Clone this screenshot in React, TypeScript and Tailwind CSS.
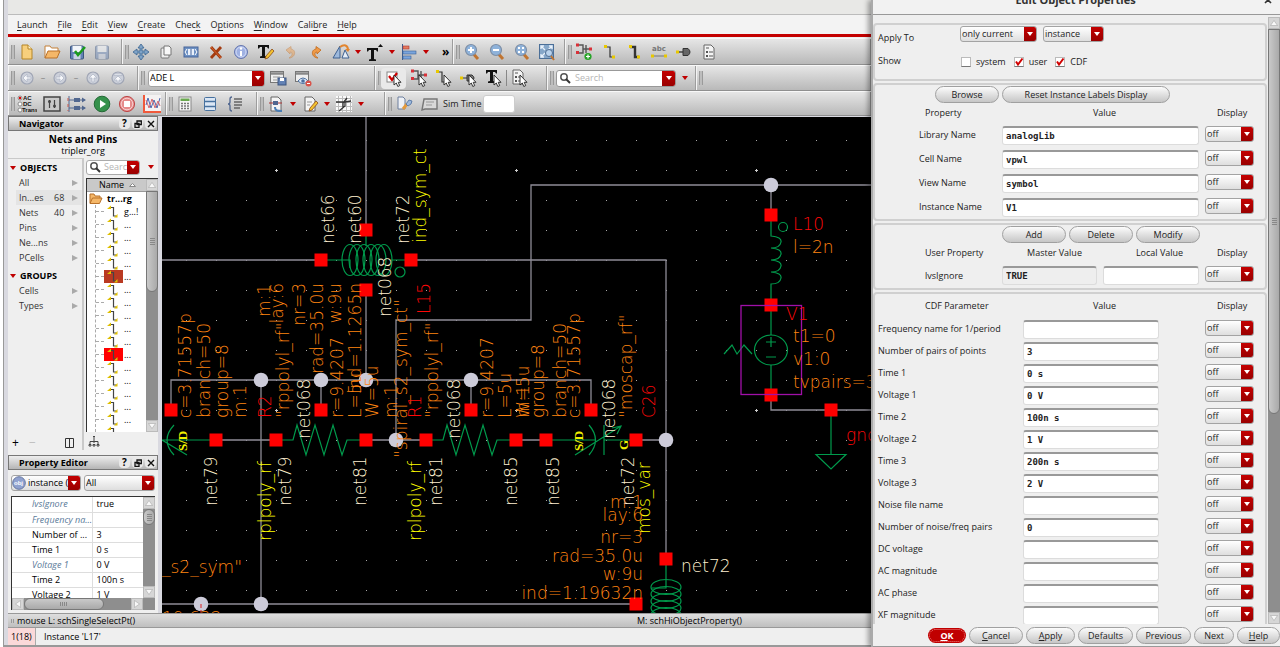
import type { ReactNode } from 'react';
import clsx from 'clsx';

/* ---------- small shared pieces ---------- */

const Svg = ({ children }: { children: ReactNode }) => (
	<svg
		width="18"
		height="18"
		viewBox="0 0 18 18"
		fill="none"
		className="shrink-0"
		aria-hidden="true"
	>
		{children}
	</svg>
);

const Caret = ({ className = 'fill-[#c00000]' }: { className?: string }) => (
	<svg width="6" height="4" viewBox="0 0 6 4" className={className}>
		<path d="M0 0h6L3 4z" />
	</svg>
);

const Tool = ({
	name,
	active,
	children,
}: {
	name: string;
	active?: boolean;
	children: ReactNode;
}) => (
	<button
		aria-label={name}
		className={clsx(
			'flex h-[21px] w-[25px] shrink-0 items-center justify-center rounded',
			active && 'bg-[#e9e9e9]'
		)}
	>
		{children}
	</button>
);

const More = () => (
	<button aria-label="More" className="flex w-[9px] shrink-0 justify-center">
		<Caret />
	</button>
);

const Group = ({
	children,
	className = '',
}: {
	children?: ReactNode;
	className?: string;
}) => (
	<div
		className={clsx(
			'flex shrink-0 items-center border-r border-r-[#9d9d9d] border-l border-l-[#f4f4f4] pl-[2px]',
			className
		)}
	>
		<span className="-mr-px h-[14px] w-1 shrink-0 border-x border-[#9a9a9a] bg-[#bdbdbd]" />
		{children}
	</div>
);

const Toolbar = ({ children, className }: { children: ReactNode; className: string }) => (
	<div
		className={clsx(
			'flex shrink-0 overflow-hidden border-t border-b border-t-[#f8f8f8] border-b-[#8f8f8f] bg-linear-to-b from-[#e6e6e6] to-[#b9b9b9]',
			className
		)}
	>
		{children}
	</div>
);

const Combo = ({
	label,
	value,
	className,
	white,
	icon,
}: {
	label: string;
	value: string;
	className: string;
	white?: boolean;
	icon?: ReactNode;
}) => (
	<div
		className={clsx(
			'flex h-4 shrink-0 items-center overflow-hidden rounded-[3px] border border-[#a3a3a3]',
			white ? 'bg-white' : 'bg-linear-to-b from-white to-[#dedede]',
			className
		)}
	>
		{icon}
		<select
			aria-label={label}
			className="h-full min-w-0 flex-1 appearance-none pl-px leading-[12px] outline-none"
		>
			<option>{value}</option>
		</select>
		<span className="pointer-events-none flex h-full w-3 shrink-0 items-center justify-center bg-linear-to-b from-[#c40000] to-[#990000]">
			<Caret className="fill-white" />
		</span>
	</div>
);

/* ---------- toolbar icons ---------- */

const Page = () => (
	<path d="M4 2h7l3 3v11H4z" fill="#f4f4f4" stroke="#666" />
);

const Pointer = () => (
	<path
		d="M9 6v10l2.300-2 1.500 3.500 1.900-.9-1.500-3.300H16z"
		fill="#fff"
		stroke="#222"
		strokeWidth=".9"
	/>
);

const NewIcon = () => (
	<Svg>
		<path d="M4 2h6l4 4v10H4z" fill="#f7cf7c" stroke="#b58526" />
		<path d="M10 2v4h4" fill="#fff1c9" stroke="#b58526" />
	</Svg>
);
const OpenIcon = () => (
	<Svg>
		<path d="M2 15V3h5l1.500 2H15v3" fill="#fff" stroke="#c48039" />
		<path d="M2 15 5 8h12l-3 7z" fill="#f5b768" stroke="#b97129" />
	</Svg>
);
const SaveIcon = ({ check }: { check?: boolean }) => (
	<Svg>
		<g opacity={check ? 1 : 0.45}>
			<rect x="2.500" y="3" width="13" height="13" rx="1" fill="#6382b5" stroke="#3c557f" />
			<rect x="4.500" y="3" width="9" height="6" fill="#f2f5fa" />
			<rect x="5.500" y="11" width="7" height="5" fill="#c8d2e4" />
		</g>
		{check && <path d="m7 8 3 4 7-8" stroke="#1c9c1c" strokeWidth="2.500" />}
	</Svg>
);
const MoveIcon = () => (
	<Svg>
		<path
			d="M8 5H6l3-4 3 4h-2v3h3V6l4 3-4 3v-2h-3v3h2l-3 4-3-4h2v-3H5v2L1 9l4-3v2h3z"
			fill="#7fa3c7"
			stroke="#3b6490"
			strokeWidth=".8"
		/>
	</Svg>
);
const CopyIcon = () => (
	<Svg>
		<rect x="4" y="5" width="8" height="10" rx="1" fill="#eee" stroke="#777" />
		<path d="M7 3h5l2 2v7H7z" fill="#f8f8f8" stroke="#777" />
	</Svg>
);
const StretchIcon = () => (
	<Svg>
		<rect x="2" y="4" width="14" height="10" fill="#6f92c4" stroke="#47659a" />
		<rect x="6" y="6" width="6" height="6" fill="#e9f0fb" />
		<path d="m5 6-2 3 2 3M13 6l2 3-2 3" stroke="#fff" />
		<path d="M9 6v6" stroke="#47659a" />
	</Svg>
);
const DeleteIcon = () => (
	<Svg>
		<path d="m4 4 10 11M14 4 4 15" stroke="#a33b10" strokeWidth="2.800" />
		<path d="m4 4 10 11" stroke="#d8622a" />
	</Svg>
);
const InfoIcon = () => (
	<Svg>
		<circle cx="9" cy="9" r="6.500" fill="#9fb1e2" stroke="#6576ae" />
		<circle cx="9" cy="9" r="5" stroke="#dfe6fa" strokeWidth=".8" />
		<path d="M9 8v5" stroke="#fff" strokeWidth="2" />
		<circle cx="9" cy="5.500" r="1.200" fill="#fff" />
	</Svg>
);
const LetterT = () => (
	<path d="M2 3h11v3.500h-1L11 5H9v9l2 .5V16H4v-1.500l2-.5V5H4L3 6.500H2z" fill="#111" />
);
const Pencil = () => (
	<path d="m8 16 1-3 6-7 2 2-6 7z" fill="#f2c230" stroke="#8c4a18" strokeWidth=".8" />
);
const TextEditIcon = () => (
	<Svg>
		<g transform="translate(-1 -1)">
			<LetterT />
		</g>
		<Pencil />
	</Svg>
);
const CurlIcon = ({ redo }: { redo?: boolean }) => (
	<Svg>
		<g opacity={redo ? 1 : 0.45} transform={redo ? undefined : 'matrix(-1 0 0 1 18 0)'}>
			<path
				d="M9 3.500 14 7l-4 4V9c-3 0-3 4 1 6C5 15 3 7 9 6z"
				fill="#ef9a48"
				stroke="#c26a1a"
				strokeWidth=".8"
			/>
		</g>
	</Svg>
);
const RotateIcon = () => (
	<Svg>
		<path d="M8 3v12H1z" fill="#9db9dc" stroke="#3e6090" />
		<path d="m10 15 3-8 4 8z" fill="#e5edf7" stroke="#3e6090" />
		<path d="M8 4c4-3 8-2 8 3" stroke="#e3852e" strokeWidth="2" />
		<path d="m13 6 5 0-2 3z" fill="#e3852e" />
	</Svg>
);
const TextUpIcon = () => (
	<Svg>
		<g transform="translate(-1 2)">
			<LetterT />
		</g>
		<path d="m12 4 2.500-3L17 4z" fill="#111" />
	</Svg>
);
const AlignIcon = () => (
	<Svg>
		<path d="M2.500 1v16" stroke="#3a5f93" />
		<rect x="3" y="3" width="6" height="3" fill="#e57b5d" stroke="#a33" strokeWidth=".6" />
		<rect x="3" y="8" width="13" height="3" fill="#7aa5dd" stroke="#3a5f93" strokeWidth=".6" />
		<rect x="3" y="13" width="8" height="3" fill="#7aa5dd" stroke="#3a5f93" strokeWidth=".6" />
	</Svg>
);
const LensIcon = ({ mark }: { mark: string }) => (
	<Svg>
		<path d="m10.500 11 4.500 5" stroke="#c07430" strokeWidth="3" />
		<circle cx="8" cy="7" r="5.500" fill="#8eb2da" stroke="#7d8ea5" strokeWidth="1.200" />
		<path d={mark} stroke="#fff" strokeWidth="2" />
	</Svg>
);
const LensFrameIcon = () => (
	<Svg>
		<rect x="1.500" y="1.500" width="14" height="14" fill="#86a7c9" stroke="#4b6f98" />
		<path d="M6 3H3v3M3 3l4 4M14 6V3h-3m3 0-4 4M3 11v3h3m-3 0 4-4" stroke="#e8f1fb" strokeWidth="1.300" />
		<circle cx="11" cy="10" r="3.500" fill="#b9d2ec" stroke="#4f6d92" />
		<path d="m13 13 3 4" stroke="#c07430" strokeWidth="2" />
	</Svg>
);
const InstGlyph = () => (
	<>
		<path d="M2 4h6v8H3M8 8h6m-3-4v8" stroke="#555" strokeWidth="1.400" />
		<path d="M1 2.500h3v3H1zM1 10h3v3H1zM14 6.500h3v3h-3z" fill="#d83038" />
	</>
);
const InstanceIcon = () => (
	<Svg>
		<g transform="translate(0 -2)">
			<InstGlyph />
		</g>
		<circle cx="13" cy="13.500" r="3.600" fill="#28a428" />
		<path d="M13 11.500v4m-2-2h4" stroke="#fff" strokeWidth="1.200" />
	</Svg>
);
const WireGlyph = ({ wide }: { wide?: boolean }) => (
	<>
		<path d="M5 4h5v10h4" stroke="#333" strokeWidth={wide ? 2.4 : 1.2} />
		<path d="M4 2h3v3H4zM12 12.500h3v3h-3z" fill="#e8c800" />
	</>
);
const WireIcon = ({ wide }: { wide?: boolean }) => (
	<Svg>
		<WireGlyph wide={wide} />
	</Svg>
);
const LabelIcon = () => (
	<svg width="20" height="16" viewBox="0 0 20 16" aria-hidden="true">
		<text x="3" y="7" className="fill-[#777] font-[DejaVu_Sans] text-[7px] font-bold">
			abc
		</text>
		<path d="M3 12h14" stroke="#777" />
		<path d="M2 10.500h3v3H2zM15 10.500h3v3h-3z" fill="#e8c800" />
	</svg>
);
const PinIcon = () => (
	<Svg>
		<path d="M2 9h6" stroke="#444" strokeWidth="1.500" />
		<path d="M8 5.500h5q4 3.500 0 7H8z" fill="#666" stroke="#333" />
		<path d="M1 7.500h3v3H1z" fill="#e8c800" />
	</Svg>
);
const FormGlyph = () => (
	<>
		<Page />
		<path d="M6 8h2v2H6zM6 12h2v2H6z" fill="#555" />
		<path d="M9 9h4M9 13h4M6 5h3" stroke="#555" />
	</>
);
const FormIcon = () => (
	<Svg>
		<FormGlyph />
	</Svg>
);
const NavIcon = ({ d }: { d: string }) => (
	<Svg>
		<circle cx="9" cy="9" r="6" fill="#ccd0da" stroke="#a0a6b5" strokeWidth="1.200" />
		<path d={d} fill="#f6f7fa" stroke="#b3b9c8" strokeWidth=".8" />
	</Svg>
);
const PanelIcon = ({ eye }: { eye?: boolean }) => (
	<Svg>
		<rect x="1.500" y="2.500" width="13" height={eye ? 10 : 11} fill="#eee" stroke="#777" />
		<path d="M2 4.500h12" stroke="#888" strokeWidth="2.500" />
		{eye ? (
			<>
				<path d="M4 12q5-6 10 0-5 5-10 0z" fill="#dbe8f7" stroke="#4c6f9f" />
				<circle cx="9" cy="12" r="1.800" fill="#4c6f9f" />
				<circle cx="14.500" cy="14.500" r="3" fill="#d9534a" />
				<path d="M13 14.500h3" stroke="#fff" />
			</>
		) : (
			<>
				<path d="M4 8h7M4 11h4" stroke="#999" />
				<rect x="9" y="9" width="8" height="7" fill="#6382b5" stroke="#3c557f" />
				<rect x="11" y="9" width="4" height="3" fill="#fff" />
			</>
		)}
	</Svg>
);
const PickIcon = ({ children }: { children: ReactNode }) => (
	<Svg>
		{children}
		<Pointer />
	</Svg>
);
const AcDcIcon = () => (
	<svg width="20" height="20" viewBox="0 0 20 20" aria-hidden="true">
		<g fill="#fff" stroke="#777" strokeWidth=".8">
			<circle cx="3" cy="4" r="2" />
			<circle cx="3" cy="10" r="2" />
			<circle cx="3" cy="16" r="2" />
		</g>
		<circle cx="3" cy="4" r="1.200" fill="#d00" />
		<g className="fill-[#111] font-[Liberation_Sans] text-[6px] font-bold">
			<text x="6" y="6">AC</text>
			<text x="6" y="12">DC</text>
			<text x="5" y="18">Trans</text>
		</g>
	</svg>
);
const SlidersIcon = () => (
	<Svg>
		<rect x="1" y="2" width="16" height="14" fill="#c9c9c9" stroke="#444" strokeWidth="1.500" />
		<path d="M6.500 5v8M11.500 5v8" stroke="#444" strokeWidth="1.200" />
		<circle cx="6.500" cy="6.500" r="1.500" fill="#444" />
		<circle cx="11.500" cy="11" r="1.500" fill="#444" />
	</Svg>
);
const OutputsIcon = () => (
	<svg width="20" height="18" viewBox="0 0 20 18" aria-hidden="true">
		<path d="M2 1v16M2 5h16M2 13h16" stroke="#51678f" fill="none" />
		<path d="M1 3v13" stroke="#cc5a4a" strokeDasharray="3 3" />
		<rect x="7" y="3" width="6" height="4" fill="#51678f" />
		<rect x="7" y="11" width="6" height="4" fill="#51678f" />
		<path d="m15 2.500 4 2.500-4 2.500zM15 10.500l4 2.500-4 2.500z" fill="#51678f" />
	</svg>
);
const PlayIcon = () => (
	<Svg>
		<circle cx="9" cy="9" r="7.800" fill="#35914b" stroke="#236935" />
		<path d="m7 5 6 4-6 4z" fill="#fff" />
	</Svg>
);
const StopIcon = () => (
	<Svg>
		<circle cx="9" cy="9" r="7.600" fill="#e58b8b" stroke="#bd4747" />
		<circle cx="9" cy="9" r="5.800" stroke="#f6cfcf" />
		<rect x="6" y="6" width="6" height="6" fill="#fff" />
	</Svg>
);
const PlotIcon = () => (
	<Svg>
		<rect width="18" height="18" fill="#f4f2f2" />
		<path d="M1 0v17h17" stroke="#f0593b" strokeWidth="2" />
		<path d="m3 10 2-7 3 10 3-8 3 8 3-10" stroke="#4b66b0" />
		<path d="m3 5 3 8 3-9 3 9 3-7 2 5" stroke="#d56a72" />
	</Svg>
);
const CalcIcon = () => (
	<Svg>
		<rect x="3" y="2" width="12" height="14" fill="#f5f5f5" stroke="#888" />
		<rect x="4.500" y="3.500" width="9" height="2.500" fill="#6aa84f" />
		<path d="M5 8.500h8M5 11h8M5 13.500h8" stroke="#777" strokeWidth="1.500" strokeDasharray="2 1" />
	</Svg>
);
const StackIcon = () => (
	<Svg>
		<rect x="3.500" y="2.500" width="11" height="13" rx="1" fill="#dbe7f5" stroke="#47719f" />
		<path d="M4 6.500h10M4 11.500h10" stroke="#47719f" strokeWidth="1.500" />
	</Svg>
);
const BraceIcon = () => (
	<Svg>
		<path d="M6 2Q4 2 4 4v3q0 2-2 2 2 0 2 2v3q0 2 2 2" stroke="#51678f" strokeWidth="1.300" />
		<path d="M8 4h8M8 7h8M8 10h8M8 13h6" stroke="#666" strokeWidth="1.400" />
	</Svg>
);
const SheetIcon = () => (
	<Svg>
		<Page />
		<path d="M2 8h13" stroke="#a33" />
		<rect x="6" y="6" width="5" height="4" fill="#51678f" />
		<path d="M8 12c0 4 3 4 7 4" stroke="#4a7db5" strokeWidth="2" />
	</Svg>
);
const NoteIcon = () => (
	<Svg>
		<Page />
		<path d="M6 7h5M6 10h3" stroke="#999" />
		<Pencil />
	</Svg>
);
const GridIcon = () => (
	<Svg>
		<rect x="1" y="1" width="16" height="16" fill="#fafafa" />
		<path d="M3.500 1v16M7.500 1v16M11.500 1v16M15.500 1v16M1 3.500h16M1 7.500h16M1 11.500h16M1 15.500h16" stroke="#bbb" />
		<path d="M1 7h9v4l-6 5M10 7l6-1M12 3l-4 5v4" stroke="#333" strokeWidth="1.300" />
	</Svg>
);
const WrenchIcon = () => (
	<Svg>
		<path d="M3 2h5l2 2v10H3z" fill="#eef1f6" stroke="#6d7f9d" />
		<path d="m8 14 4-5" stroke="#e49a3c" strokeWidth="3" />
		<path d="m11 9 3-4 3 1-1 3-3 2z" fill="#9db9dc" stroke="#4c6f9f" strokeWidth=".8" />
	</Svg>
);
const NoteBoxIcon = () => (
	<Svg>
		<path d="M4 4h13v10H5l-3 1z" fill="#d9d9d9" stroke="#777" strokeWidth="1.400" />
		<path d="M6 7h8M6 10h6" stroke="#999" />
	</Svg>
);
const FindIcon = () => (
	<svg width="12" height="12" viewBox="0 0 12 12" className="shrink-0" fill="none" aria-hidden="true">
		<circle cx="5" cy="5" r="3.200" stroke="#555" strokeWidth="1.500" />
		<path d="m7 7 4 4" stroke="#333" strokeWidth="2" />
	</svg>
);

/* ---------- menu and toolbars ---------- */

// [before, mnemonic, after]
const menus = [
	['', 'L', 'aunch'],
	['', 'F', 'ile'],
	['', 'E', 'dit'],
	['', 'V', 'iew'],
	['', 'C', 'reate'],
	['Chec', 'k', ''],
	['O', 'p', 'tions'],
	['', 'W', 'indow'],
	['Cali', 'b', 're'],
	['', 'H', 'elp'],
];

const MenuBar = () => (
	<nav className="flex h-[19px] shrink-0 items-center gap-[10px] bg-[#f3f3f3] pt-px pl-[9px] text-[#222]">
		{menus.map(([a, key, b]) => (
			<button key={a + key + b}>
				{a}
				<u className="underline-offset-2">{key}</u>
				{b}
			</button>
		))}
	</nav>
);

const Toolbars = () => (
	<div className="shrink-0 border-t-[3px] border-[#c40000] pt-px">
		<Toolbar className="h-[27px]">
			<Group className="w-[114px]">
				<Tool name="New"><NewIcon /></Tool>
				<Tool name="Open"><OpenIcon /></Tool>
				<Tool name="Check and Save"><SaveIcon check /></Tool>
				<Tool name="Save"><SaveIcon /></Tool>
			</Group>
			<Group className="w-[331px]">
				<Tool name="Move"><MoveIcon /></Tool>
				<Tool name="Copy"><CopyIcon /></Tool>
				<Tool name="Stretch"><StretchIcon /></Tool>
				<Tool name="Delete"><DeleteIcon /></Tool>
				<Tool name="Info"><InfoIcon /></Tool>
				<Tool name="Edit text"><TextEditIcon /></Tool>
				<Tool name="Undo"><CurlIcon /></Tool>
				<Tool name="Redo"><CurlIcon redo /></Tool>
				<Tool name="Rotate"><RotateIcon /></Tool>
				<More />
				<Tool name="Font up"><TextUpIcon /></Tool>
				<More />
				<Tool name="Align"><AlignIcon /></Tool>
				<More />
				<button className="ml-3 text-[12px] leading-none font-bold">»</button>
			</Group>
			<Group className="w-[112px]">
				<Tool name="Zoom in"><LensIcon mark="M8 4v6M5 7h6" /></Tool>
				<Tool name="Zoom out"><LensIcon mark="M5 7h6" /></Tool>
				<Tool name="Zoom fit"><LensIcon mark="M5 5h2M9 5h2M5 9h2M9 9h2" /></Tool>
				<Tool name="Zoom selected"><LensFrameIcon /></Tool>
			</Group>
			<Group className="flex-1">
				<Tool name="Add instance"><InstanceIcon /></Tool>
				<Tool name="Narrow wire"><WireIcon /></Tool>
				<Tool name="Wide wire"><WireIcon wide /></Tool>
				<Tool name="Label"><LabelIcon /></Tool>
				<Tool name="Pin"><PinIcon /></Tool>
				<Tool name="Form"><FormIcon /></Tool>
			</Group>
		</Toolbar>
		<Toolbar className="h-[26px]">
			<Group className="w-[130px] text-[#888]">
				<Tool name="Back"><NavIcon d="m5 9 4-4v3h4v2H9v3z" /></Tool>
				<span className="w-2 text-center">–</span>
				<Tool name="Forward"><NavIcon d="m13 9-4-4v3H5v2h4v3z" /></Tool>
				<span className="w-2 text-center">–</span>
				<Tool name="Up"><NavIcon d="m9 5 4 4h-3v4H8V9H5z" /></Tool>
				<Tool name="Top"><NavIcon d="M5 5h8v1.500H5zM9 7l4 4h-3v2H8v-2H5z" /></Tool>
			</Group>
			<Group className="w-[237px]">
				<Combo label="Workspace" value="ADE L" white className="ml-[4px] h-[17px] w-[117px]" />
				<Tool name="Save workspace"><PanelIcon /></Tool>
				<Tool name="Hide workspace"><PanelIcon eye /></Tool>
			</Group>
			<Group className="w-[172px]">
				<Tool name="Select all" active>
					<PickIcon>
						<rect x="2" y="3" width="10" height="10" fill="#fff" stroke="#888" />
						<path d="m4 7 3 4 5-7" stroke="#d00000" strokeWidth="2.200" />
					</PickIcon>
				</Tool>
				<Tool name="Select instance"><PickIcon><g transform="translate(0 -2)"><InstGlyph /></g></PickIcon></Tool>
				<Tool name="Select wire"><PickIcon><g transform="translate(-3 -1)"><WireGlyph /></g></PickIcon></Tool>
				<Tool name="Select pin">
					<PickIcon>
						<path d="M1 9h6m0-3h5q4 3 0 6H7z" fill="#777" stroke="#333" />
						<path d="M0 7.500h3v3H0z" fill="#e8c800" />
					</PickIcon>
				</Tool>
				<Tool name="Select text"><PickIcon><g transform="translate(-1 -2)"><LetterT /></g></PickIcon></Tool>
				<span className="h-4 w-px bg-[#888]" />
				<Tool name="Select form"><PickIcon><g transform="translate(-2 -1)"><FormGlyph /></g></PickIcon></Tool>
			</Group>
			<Group className="w-[149px]">
				<div className="ml-[3px] flex h-[17px] w-[120px] items-center overflow-hidden rounded-[3px] border border-[#999] bg-white pl-[2px]">
					<FindIcon />
					<input
						aria-label="Search"
						placeholder="Search"
						className="ml-1 w-0 flex-1 outline-none placeholder:text-[#b5b5b5]"
					/>
					<span className="flex h-full w-[13px] items-center justify-center bg-linear-to-b from-[#c40000] to-[#990000]">
						<Caret className="fill-white" />
					</span>
				</div>
				<span className="ml-1"><More /></span>
			</Group>
			<Group className="flex-1" />
		</Toolbar>
		<Toolbar className="h-[25px]">
			<Group className="w-[158px]">
				<Tool name="Choose analyses"><AcDcIcon /></Tool>
				<Tool name="Variables"><SlidersIcon /></Tool>
				<Tool name="Outputs"><OutputsIcon /></Tool>
				<Tool name="Run"><PlayIcon /></Tool>
				<Tool name="Stop"><StopIcon /></Tool>
				<Tool name="Plot"><PlotIcon /></Tool>
			</Group>
			<Group className="w-[91px]">
				<Tool name="Calculator"><CalcIcon /></Tool>
				<Tool name="Results"><StackIcon /></Tool>
				<Tool name="Expressions"><BraceIcon /></Tool>
			</Group>
			<Group className="w-[128px]">
				<Tool name="Sheet"><SheetIcon /></Tool>
				<More />
				<Tool name="Annotate"><NoteIcon /></Tool>
				<More />
				<Tool name="Grid"><GridIcon /></Tool>
				<More />
			</Group>
			<Group className="flex-1">
				<Tool name="Configure"><WrenchIcon /></Tool>
				<Tool name="Log"><NoteBoxIcon /></Tool>
				<label className="ml-[2px] flex items-center text-[#222]">
					Sim Time
					<input className="ml-px h-[18px] w-8 rounded-[3px] border border-[#ccc] bg-white px-1" />
				</label>
			</Group>
		</Toolbar>
	</div>
);

/* ---------- docked assistants ---------- */

const DockTitle = ({ children }: { children: ReactNode }) => (
	<div className="flex h-[15px] shrink-0 items-center gap-[2px] border border-[#777] bg-linear-to-b from-[#eee] to-[#b5b5b5] px-px">
		<h2 className="flex-1 pl-[9px] font-bold">{children}</h2>
		<button aria-label="Help" className="size-[11px] rounded-sm bg-[#e8e8e8] text-[10px] leading-[11px] font-bold">
			?
		</button>
		<button aria-label="Float" className="flex size-[11px] items-center justify-center rounded-sm bg-[#e8e8e8]">
			<svg width="8" height="8" viewBox="0 0 8 8" fill="#e8e8e8" stroke="#111" strokeWidth="1.300">
				<path d="M3 1h4.300v3.500H3zM1 3.500h4v3.800H1z" />
			</svg>
		</button>
		<button aria-label="Close" className="flex size-[11px] items-center justify-center rounded-sm bg-[#e8e8e8]">
			<svg width="8" height="8" viewBox="0 0 8 8" stroke="#111" strokeWidth="1.400">
				<path d="m1 1 6 6M7 1 1 7" />
			</svg>
		</button>
	</div>
);

const ScrollEnd = ({ d }: { d: string }) => (
	<span className="flex size-3 shrink-0 items-center justify-center border border-[#bbb] bg-[#d6d6d6]">
		<svg width="8" height="8" viewBox="0 0 8 8" fill="#f8f8f8" stroke="#aaa" strokeWidth=".6">
			<path d={d} />
		</svg>
	</span>
);

const UP = 'M0.500 6.500h7L4 1.500z';
const DOWN = 'M0.500 1.500h7L4 6.500z';
const LEFT = 'M6.500.5v7L1.500 4z';
const RIGHT = 'M1.500.5v7L6.500 4z';

const VScroll = ({ thumb }: { thumb: string }) => (
	<div className="flex w-3 shrink-0 flex-col bg-[#8e8e8e]">
		<ScrollEnd d={UP} />
		<div className="min-h-0 flex-1">
			<span
				className={clsx(
					'flex w-3 items-center justify-center rounded-b-md border border-[#777] bg-linear-to-r from-[#c9c9c9] to-[#a9a9a9]',
					thumb
				)}
			>
				<span className="h-[7px] w-[5px] bg-[repeating-linear-gradient(#888_0_1px,transparent_1px_2px)]" />
			</span>
		</div>
		<ScrollEnd d={DOWN} />
	</div>
);

const sections = [
	{
		title: 'OBJECTS',
		rows: [
			['All', ''],
			['In...es', '68'],
			['Nets', '40'],
			['Pins', ''],
			['Ne...ns', ''],
			['PCells', ''],
		],
	},
	{
		title: 'GROUPS',
		rows: [
			['Cells', ''],
			['Types', ''],
		],
	},
];

const treeRows = ['g...!', ...Array(17).fill('...')];

const NetIcon = ({ className }: { className?: string }) => (
	<svg width="19" height="13" viewBox="0 0 19 13" fill="none" className={className}>
		<path d="M5 2.500h4.500V11H12" stroke="#444" strokeWidth="1.200" />
		<path d="M3 4 7 .5V4zM10 12.500l3.500-3.500v3.500z" fill="#e0c000" />
	</svg>
);

const Navigator = () => (
	<section className="flex min-h-0 flex-1 flex-col">
		<DockTitle>Navigator</DockTitle>
		<div className="h-[27px] shrink-0 pt-[2px] text-center">
			<h3 className="text-[10px] leading-3 font-bold">Nets and Pins</h3>
			<p className="leading-[11px]">tripler_org</p>
		</div>
		<div className="flex min-h-0 flex-1">
			<div className="flex w-[76px] flex-col border-t border-r-2 border-[#c9c9c9] pt-px">
				{sections.map((s) => (
					<div key={s.title} className="mb-[3px]">
						<h4 className="flex h-[15px] items-center gap-1 pl-[2px] font-bold">
							<Caret />
							{s.title}
						</h4>
						<ul>
							{s.rows.map(([name, count]) => (
								<li
									key={name}
									className={clsx(
										'ml-2 flex h-[15px] items-center pr-1 pl-[3px] text-[#333]',
										name === 'In...es' && 'bg-[#e4e4e4]'
									)}
								>
									<span className="flex-1">{name}</span>
									<span className="w-[18px]">{count}</span>
									<svg width="6" height="6" viewBox="0 0 6 6" fill="#aaa">
										<path d="M0 0v6l6-3z" />
									</svg>
								</li>
							))}
						</ul>
					</div>
				))}
				<div className="mt-auto flex h-[14px] items-center pr-2 pl-1 text-[12px]">
					<button className="w-[17px] text-left">+</button>
					<button className="text-[#bbb]">−</button>
					<svg width="9" height="10" viewBox="0 0 9 10" fill="none" stroke="#333" className="ml-auto">
						<path d="M.5.5h8v9h-8zM4.500.5v9" />
					</svg>
				</div>
			</div>
			<div className="flex min-w-0 flex-1 flex-col pl-[2px]">
				<div className="mt-px mb-[3px] flex h-4 shrink-0 items-center gap-[6px]">
					<div className="flex h-[15px] w-[54px] items-center overflow-hidden rounded-[3px] border border-[#aaa] bg-white pl-[2px]">
						<FindIcon />
						<input
							aria-label="Filter"
							placeholder="Search"
							className="ml-[3px] w-0 flex-1 outline-none placeholder:text-[#b5b5b5]"
						/>
						<span className="flex h-full w-3 items-center justify-center bg-linear-to-b from-[#c40000] to-[#990000]">
							<Caret className="fill-white" />
						</span>
					</div>
					<More />
				</div>
				<div className="flex min-h-0 flex-1 border-t border-l border-[#333] bg-white">
					<div className="flex min-w-0 flex-1 flex-col overflow-hidden">
						<div className="flex h-[13px] shrink-0 items-center border-b border-[#999] bg-[#c9c9c9] pl-3">
							Name
							<svg width="7" height="4" viewBox="0 0 7 4" className="ml-[5px] fill-white stroke-[#888]">
								<path d="M.5 3.500h6l-3-3z" />
							</svg>
						</div>
						<div className="flex h-[13px] shrink-0 items-center pl-[2px] font-bold">
							<span className="w-[18px]">
								<svg width="14" height="12" viewBox="0 0 14 12" fill="#f5b768" stroke="#b97129">
									<path d="M1 10V1h4l1 2h5v2M1 10.500 3.500 5H13l-2.500 5.500z" />
								</svg>
							</span>
							tr...rg
						</div>
						<ul className="ml-2 min-h-0 flex-1 overflow-hidden border-l border-dashed border-[#aaa]">
							{treeRows.map((name, i) => (
								<li key={i} className="flex h-[13px] items-center">
									<span className="w-2 border-t border-dashed border-[#aaa]" />
									<NetIcon
										className={clsx(i === 5 && 'bg-[#b93a22]', i === 11 && 'bg-[#ff0000]')}
									/>
									<span className="ml-px leading-[13px]">{name}</span>
								</li>
							))}
						</ul>
					</div>
					<VScroll thumb="h-[101px]" />
				</div>
				<div className="flex h-[18px] shrink-0 items-center pl-[2px]">
					<svg width="12" height="12" viewBox="0 0 12 12" fill="none" stroke="#444">
						<path d="M6 2v6M2 9V6.500h8V9M5 1.500h2M1 9.500h2v1.500H1zM5 9.500h2v1.500H5zM9 9.500h2v1.500H9z" />
					</svg>
				</div>
			</div>
		</div>
	</section>
);

const properties = [
	{ name: 'lvsIgnore', value: 'true', dim: true },
	{ name: 'Frequency na...', value: '', dim: true },
	{ name: 'Number of ...', value: '3' },
	{ name: 'Time 1', value: '0 s' },
	{ name: 'Voltage 1', value: '0 V', dim: true },
	{ name: 'Time 2', value: '100n s' },
	{ name: 'Voltage 2', value: '1 V' },
];

const ObjIcon = () => (
	<svg width="14" height="14" viewBox="0 0 14 14" className="mr-px shrink-0" aria-hidden="true">
		<circle cx="7" cy="7" r="6.300" fill="#8fa1cf" stroke="#66779f" />
		<text x="2" y="9" className="fill-white font-[Liberation_Sans] text-[6px] font-bold">
			obj
		</text>
	</svg>
);

const PropertyEditor = () => (
	<section className="mt-[5px] shrink-0">
		<DockTitle>Property Editor</DockTitle>
		<div className="flex h-[26px] items-center gap-[3px] px-[3px]">
			<Combo label="Object type" value="instance (1)" className="w-[70px]" icon={<ObjIcon />} />
			<Combo label="Filter" value="All" className="w-[71px]" />
		</div>
		<div className="mx-[3px] mb-[3px] border-t border-l border-[#333] bg-white">
			<div className="flex h-[101px]">
				<div className="flex-1 overflow-hidden">
					<table className="w-full table-fixed border-collapse">
						<tbody>
							{properties.map((p) => (
								<tr key={p.name} className="h-[15px] border-b border-[#ddd]">
									<th
										className={clsx(
											'w-20 border-r border-[#ddd] p-0 pl-5 text-left font-normal whitespace-nowrap',
											p.dim && 'text-[#5a7a99] italic'
										)}
									>
										{p.name}
									</th>
									<td className="p-0 pl-1 whitespace-nowrap">{p.value}</td>
								</tr>
							))}
						</tbody>
					</table>
				</div>
				<VScroll thumb="h-4 rounded-t-md" />
			</div>
			<div className="flex h-3 bg-[#8e8e8e] pr-3">
				<ScrollEnd d={LEFT} />
				<div className="flex-1">
					<span className="flex h-3 w-20 items-center justify-center rounded-md border border-[#777] bg-linear-to-b from-[#c9c9c9] to-[#a9a9a9]">
						<span className="h-1 w-2 bg-[repeating-linear-gradient(90deg,#888_0_1px,transparent_1px_2px)]" />
					</span>
				</div>
				<ScrollEnd d={RIGHT} />
			</div>
		</div>
	</section>
);

/* ---------- schematic ---------- */

const wires =
	'M162 260H321M411 260H666V559M366 117V230M366 290V380M171 410V380H591V410M321 380V410M471 380V410M261 380V604M216 440H276M366 440H426M516 440H546M636 440H666M396 440V320H531V185H872M771 185V215M771 395V410H872M162 604H636';

const junctions = [
	[771, 185], [261, 380], [321, 380], [366, 380], [471, 380],
	[396, 440], [666, 440], [201, 604], [261, 604],
];

const pins = [
	[366, 230], [321, 260], [411, 260], [366, 290], [171, 410], [321, 410],
	[471, 410], [591, 410], [216, 440], [276, 440], [366, 440], [426, 440],
	[516, 440], [546, 440], [636, 440], [771, 215], [771, 305], [771, 395],
	[831, 410], [666, 559], [636, 604],
];

const ORANGE = 'fill-[#ff8410]';
const YELLOW = 'fill-[#ffff00]';
const RED = 'fill-[#ff0808]';
const NET = 'fill-[#fff0d0]';

type Label = [text: string, x: number, y: number, color: string];

// read bottom to top, y is where the text starts
const upLabels: Label[] = [
	['net66', 334, 244, NET],
	['net60', 361, 244, NET],
	['net72', 409, 244, NET],
	['ind_sym_ct', 426, 243, YELLOW],
	['net068', 391, 317, NET],
	['L15', 430, 314, RED],
	['c=3.71557p', 191, 418, ORANGE],
	['branch=50', 210, 418, ORANGE],
	['group=8', 228, 418, ORANGE],
	['m:1', 246, 418, ORANGE],
	['R2', 271, 418, RED],
	['"rppolyl_rf"', 289, 418, ORANGE],
	['net068', 310, 439, NET],
	['r=9.4207', 343, 418, ORANGE],
	['L=5u', 361, 418, ORANGE],
	['W=5u', 378, 418, ORANGE],
	['m:1', 397, 418, ORANGE],
	['"spiral_s2_sym_ct"', 407, 458, ORANGE],
	['R1', 421, 418, RED],
	['"rppolyl_rf"', 438, 418, ORANGE],
	['net068', 460, 439, NET],
	['r=9.4207', 493, 418, ORANGE],
	['L=5u', 511, 418, ORANGE],
	['W=5u', 529, 418, ORANGE],
	['m:1', 529, 418, ORANGE],
	['group=8', 544, 418, ORANGE],
	['branch=50', 566, 418, ORANGE],
	['c=3.71557p', 580, 418, ORANGE],
	['net068', 615, 439, NET],
	['"moscap_rf"', 632, 418, ORANGE],
	['C26', 655, 418, RED],
	['net79', 217, 506, NET],
	['net79', 291, 506, NET],
	['net81', 366, 506, NET],
	['net81', 442, 506, NET],
	['net85', 517, 506, NET],
	['net85', 559, 506, NET],
	['net72', 634, 506, NET],
	['mos_var', 650, 534, YELLOW],
	['rplpoly_rf', 271, 541, YELLOW],
	['rplpoly_rf', 421, 541, YELLOW],
];

// read bottom to top, y is where the text ends
const upEndLabels: Label[] = [
	['m:1', 270, 284, ORANGE],
	['lay:6', 283, 283, ORANGE],
	['nr=3', 305, 283, ORANGE],
	['rad=35.0u', 323, 283, ORANGE],
	['w:9u', 341, 283, ORANGE],
	['ind=1.1265n', 361, 283, ORANGE],
];

const flatLabels: Label[] = [
	['_s2_sym"', 162, 573, ORANGE],
	['19.632', 162, 624, ORANGE],
	['net72', 681, 572, NET],
	['L10', 793, 230, RED],
	['l=2n', 793, 253, ORANGE],
	['V1', 786, 320, RED],
	['t1=0', 793, 342, ORANGE],
	['v1:0', 793, 365, ORANGE],
	['tvpairs=3', 793, 388, ORANGE],
	['gnd!', 846, 441, RED],
];

const flatEndLabels: Label[] = [
	['m:1', 643, 508, ORANGE],
	['lay:6', 643, 521, ORANGE],
	['nr=3', 643, 543, ORANGE],
	['rad=35.0u', 643, 562, ORANGE],
	['w:9u', 643, 580, ORANGE],
	['ind=1.19632n', 643, 599, ORANGE],
];

const Up = ({ label: [text, x, y, color], anchor }: { label: Label; anchor?: 'end' }) => (
	<text transform={`translate(${x} ${y}) rotate(-90)`} textAnchor={anchor} className={color}>
		{text}
	</text>
);

const Flat = ({ label: [text, x, y, color], anchor }: { label: Label; anchor?: 'end' }) => (
	<text x={x} y={y} textAnchor={anchor} className={color}>
		{text}
	</text>
);

const ZIGZAG = 'M276 440H293L297 425 306 455 315 425 324 455 333 425 342 455 347 440H366';

const Schematic = () => (
	<svg className="h-full w-full bg-black" fill="none" role="img" aria-label="Schematic">
		<defs>
			<pattern id="dots" x="186" y="140" width="30" height="30" patternUnits="userSpaceOnUse">
				<rect width="1" height="1" fill="#a8a8a8" />
			</pattern>
			<pattern id="majorDots" x="275" y="169" width="240" height="240" patternUnits="userSpaceOnUse">
				<path d="M0 1h3v1H0zM1 0h1v3H1z" fill="#ccc" />
			</pattern>
		</defs>
		<g transform="translate(-162 -117)">
			<rect x="162" y="117" width="3000" height="2000" fill="url(#dots)" />
			<rect x="162" y="117" width="3000" height="2000" fill="url(#majorDots)" />
			<path d={wires} stroke="#8e8c96" strokeWidth="1.300" />

			<g stroke="#009a4c" strokeWidth="1.200">
				{/* L15 */}
				{[350, 357, 364, 371, 378, 384].map((x) => (
					<ellipse key={x} cx={x} cy="260" rx="8" ry="15.500" />
				))}
				<path d="M327 260H350V268M391 260H405M366 236V246" />
				<circle cx="400" cy="272" r="5" />
				{/* R2, R1 */}
				<path d={ZIGZAG} />
				<path d={ZIGZAG} transform="translate(150 0)" />
				{/* varactors */}
				<path d="M210 440H162L187 455M174 425Q160 440 174 455" />
				<path d="M552 440H595M589 425Q602 440 589 455M604 425V455M604 440H630M575 455 621 426M612 428 621 426 617 434" />
				{/* L10 */}
				<path d="M771 221V236Q782 237 781 242 780 248 771 248 782 249 781 254 780 260 771 260 782 261 781 266 780 272 771 272 782 273 781 278 780 284 771 284V299" />
				<circle cx="783" cy="227" r="4.500" />
				{/* V1 */}
				<path d="M771 311V335M771 365V389M766 342H776M771 337V347M766 357H776" />
				<ellipse cx="771" cy="350" rx="16.500" ry="15" />
				<path d="m724 354 8-9 5 9 7-9 8 9" />
				{/* gnd */}
				<path d="M831 416V454M816 454.500H846L831 469Z" />
				{/* lower inductor */}
				<path d="M666 565V588H652" />
				{[587, 594, 601, 608, 615, 622].map((y) => (
					<ellipse key={y} cx="666" cy={y} rx="15" ry="7.500" />
				))}
			</g>

			{junctions.map(([x, y]) => (
				<circle key={`${x}-${y}`} cx={x} cy={y} r="7.300" fill="#cccbd9" />
			))}
			<path d="M201 604V613" stroke="#d22" strokeDasharray="4 2" />
			{pins.map(([x, y]) => (
				<rect key={`${x}-${y}`} x={x - 6.5} y={y - 6.5} width="13" height="13" fill="#f00" />
			))}
			<rect x="741" y="305.500" width="60.500" height="89" stroke="#a010a8" strokeWidth="1.300" />

			<g className="font-['DejaVu_Sans_Light','DejaVu_Sans',sans-serif] text-[17px] font-extralight">
				{upLabels.map((l, i) => (
					<Up key={i} label={l} />
				))}
				{upEndLabels.map((l, i) => (
					<Up key={i} label={l} anchor="end" />
				))}
				{flatLabels.map((l, i) => (
					<Flat key={i} label={l} />
				))}
				{flatEndLabels.map((l, i) => (
					<Flat key={i} label={l} anchor="end" />
				))}
			</g>
			<g className="font-[Liberation_Serif] text-[13px] font-bold">
				<Up label={['S/D', 187, 451, 'fill-[#f0f000]']} />
				<Up label={['S/D', 583, 451, 'fill-[#f0f000]']} />
				<Up label={['G', 628, 450, 'fill-[#f0f000]']} />
			</g>
		</g>
	</svg>
);

/* ---------- Edit Object Properties form ---------- */

const Panel = ({ children, className }: { children: ReactNode; className?: string }) => (
	<div className={clsx('shrink-0 rounded border-2 border-[#d0d0d0] px-[3px]', className)}>
		{children}
	</div>
);

const Push = ({ children, className }: { children: ReactNode; className?: string }) => (
	<button
		className={clsx(
			'h-[17px] shrink-0 rounded-full border border-[#a0a0a0] bg-linear-to-b from-[#fcfcfc] to-[#c6c6c6] leading-none text-[#222]',
			className
		)}
	>
		{children}
	</button>
);

const Field = ({
	id,
	value = '',
	className,
	readOnly,
}: {
	id: string;
	value?: string;
	className: string;
	readOnly?: boolean;
}) => (
	<input
		id={id}
		aria-label={id}
		defaultValue={value}
		readOnly={readOnly}
		className={clsx(
			"h-[19px] shrink-0 rounded-[3px] border border-t-2 border-[#dcdcdc] border-t-[#999] px-[3px] font-['DejaVu_Sans_Mono'] font-bold outline-none",
			readOnly ? 'bg-[#eee]' : 'bg-white',
			className
		)}
	/>
);

const Check = ({ children, checked }: { children: string; checked?: boolean }) => (
	<label className="flex items-center gap-[5px]">
		<span className="grid">
			<input
				type="checkbox"
				defaultChecked={checked}
				className="peer col-start-1 row-start-1 size-[10px] appearance-none border border-[#bbb] border-b-[#777] bg-white"
			/>
			<svg
				width="10"
				height="10"
				viewBox="0 0 10 10"
				fill="none"
				className="pointer-events-none invisible col-start-1 row-start-1 peer-checked:visible"
			>
				<path d="m2 4.500 2 3 4.500-6" stroke="#d00000" strokeWidth="2" />
			</svg>
		</span>
		{children}
	</label>
);

const idFields = [
	['Library Name', 'analogLib'],
	['Cell Name', 'vpwl'],
	['View Name', 'symbol'],
	['Instance Name', 'V1'],
];

const cdfParams = [
	['Frequency name for 1/period', ''],
	['Number of pairs of points', '3'],
	['Time 1', '0 s'],
	['Voltage 1', '0 V'],
	['Time 2', '100n s'],
	['Voltage 2', '1 V'],
	['Time 3', '200n s'],
	['Voltage 3', '2 V'],
	['Noise file name', ''],
	['Number of noise/freq pairs', '0'],
	['DC voltage', ''],
	['AC magnitude', ''],
	['AC phase', ''],
	['XF magnitude', ''],
];

const Display = ({ name }: { name: string }) => (
	<Combo label={`${name} display`} value="off" className="mb-[3px] ml-auto w-[49px]" />
);

const EditForm = () => (
	<aside className="flex w-[409px] shrink-0 flex-col border-l-2 border-[#aaa] bg-[#efefef] text-[#222] shadow-[-3px_0_5px_rgba(0,0,0,0.350)]">
		<div className="flex h-[15px] shrink-0 overflow-hidden border-b border-[#999] bg-[#f2f2f2] font-bold text-[#333]">
			<h1 className="flex-1 pl-[18px] text-center text-[11px] leading-[0px]">Edit Object Properties</h1>
			<button aria-label="Close" className="mr-1 flex h-1 w-4 items-end justify-center">
				<svg width="8" height="8" viewBox="0 0 8 8" stroke="#333" strokeWidth="1.600" className="shrink-0">
					<path d="m1 1 6 6M7 1 1 7" />
				</svg>
			</button>
		</div>
		<div className="flex min-h-0 flex-1 pt-[2px]">
			<div className="flex min-w-0 flex-1 flex-col gap-[2px] overflow-hidden pt-[6px] pr-px">
				<Panel className="h-[58px]">
					<div className="flex h-[26px] items-center">
						<span className="w-[82px]">Apply To</span>
						<Combo label="Scope" value="only current" className="mb-2 w-[77px]" />
						<Combo label="Kind" value="instance" className="mb-2 ml-[6px] w-[61px]" />
					</div>
					<div className="flex h-5 items-center">
						<span className="w-[82px]">Show</span>
						<div className="mt-px flex gap-2 pl-px">
							<Check>system</Check>
							<Check checked>user</Check>
							<Check checked>CDF</Check>
						</div>
					</div>
				</Panel>

				<Panel className="pr-[11px]">
					<div className="flex gap-[3px] pt-px pl-[57px]">
						<Push className="w-16">Browse</Push>
						<Push className="w-[168px]">Reset Instance Labels Display</Push>
					</div>
					<div className="flex h-5 items-center">
						<span className="w-[124px] pl-[47px]">Property</span>
						<span className="w-[205px] text-center">Value</span>
						<span className="ml-auto w-[37px]">Display</span>
					</div>
					{idFields.map(([name, value]) => (
						<div key={name} className="flex h-6 items-center">
							<label htmlFor={name} className="w-[124px] pl-[41px]">
								{name}
							</label>
							<Field id={name} value={value} className="w-[197px]" />
							<Display name={name} />
						</div>
					))}
				</Panel>

				<Panel className="pr-[11px]">
					<div className="flex gap-[3px] pt-px pl-[124px]">
						<Push className="w-16">Add</Push>
						<Push className="w-16">Delete</Push>
						<Push className="w-16">Modify</Push>
					</div>
					<div className="flex h-5 items-center">
						<span className="w-[124px] pl-[47px]">User Property</span>
						<span className="w-[105px] text-center">Master Value</span>
						<span className="w-[105px] text-center">Local Value</span>
						<span className="ml-auto w-[37px]">Display</span>
					</div>
					<div className="flex h-[25px] items-center">
						<label htmlFor="lvsIgnore" className="w-[124px] pl-[47px]">
							lvsIgnore
						</label>
						<Field id="lvsIgnore" value="TRUE" readOnly className="mr-[6px] w-[95px]" />
						<Field id="lvsIgnore local" className="w-24" />
						<Display name="lvsIgnore" />
					</div>
				</Panel>

				<Panel className="rounded-b-none border-b-0 pr-[11px]">
					<div className="flex h-6 items-center">
						<span className="w-[124px] pl-[47px]">CDF Parameter</span>
						<span className="w-[205px] text-center">Value</span>
						<span className="ml-auto w-[37px]">Display</span>
					</div>
					{cdfParams.map(([name, value]) => (
						<div key={name} className="flex h-[22px] items-center">
							<label htmlFor={name} className="w-36">
								{name}
							</label>
							<Field id={name} value={value} className="ml-px w-[136px]" />
							<Display name={name} />
						</div>
					))}
				</Panel>
			</div>
			<VScroll thumb="h-[385px]" />
		</div>
		<div className="flex h-[23px] shrink-0 items-center justify-end gap-[3px] border-b border-[#999]">
			<button className="h-[15px] w-[38px] rounded-full bg-[#c00000] leading-none font-bold text-white outline-1 -outline-offset-2 outline-[#f08080] outline-dotted">
				<u>O</u>K
			</button>
			<Push className="w-[54px]"><u>C</u>ancel</Push>
			<Push className="w-[49px]"><u>A</u>pply</Push>
			<Push className="w-[55px]">Defaults</Push>
			<Push className="w-[55px]">Previous</Push>
			<Push className="w-10">Next</Push>
			<Push className="w-[43px]"><u>H</u>elp</Push>
		</div>
	</aside>
);

const App = () => (
	<div className="flex h-screen overflow-hidden bg-white font-['Open_Sans',sans-serif] text-[9px] leading-3 text-black">
		<div className="ml-[3px] flex min-w-0 flex-1 flex-col border-b-2 border-l border-[#999]">
			<div className="flex min-h-0 flex-1 flex-col border-l-4 border-[#d9d9e0] bg-[#efefef]">
				<div className="h-[15px] shrink-0 border-b border-[#bbb] bg-[#e8e8e6]" />
				<MenuBar />
				<Toolbars />
				<div className="flex min-h-0 flex-1">
					<div className="flex w-[150px] shrink-0 flex-col">
						<Navigator />
						<PropertyEditor />
					</div>
					<div className="min-w-0 flex-1 border-t border-l-4 border-[#d9d9e0]">
						<Schematic />
					</div>
				</div>
				<div className="flex h-[15px] shrink-0 items-center border-t border-b border-[#999] bg-linear-to-b from-[#dedede] to-[#bfbfbf] pl-[3px]">
					<span className="mr-[2px] h-1 w-1 bg-[repeating-linear-gradient(90deg,#999_0_1px,transparent_1px_2px)]" />
					<span className="w-[620px]">mouse L: schSingleSelectPt()</span>
					<span>M: schHiObjectProperty()</span>
				</div>
				<div className="flex h-[17px] shrink-0 items-center">
					<span className="flex h-full w-7 items-center border-r border-[#aaa] bg-[#fbd9d9] pl-[3px]">
						1(18)
					</span>
					<span className="pl-2">Instance 'L17'</span>
				</div>
			</div>
		</div>
		<EditForm />
	</div>
);

export default App;
